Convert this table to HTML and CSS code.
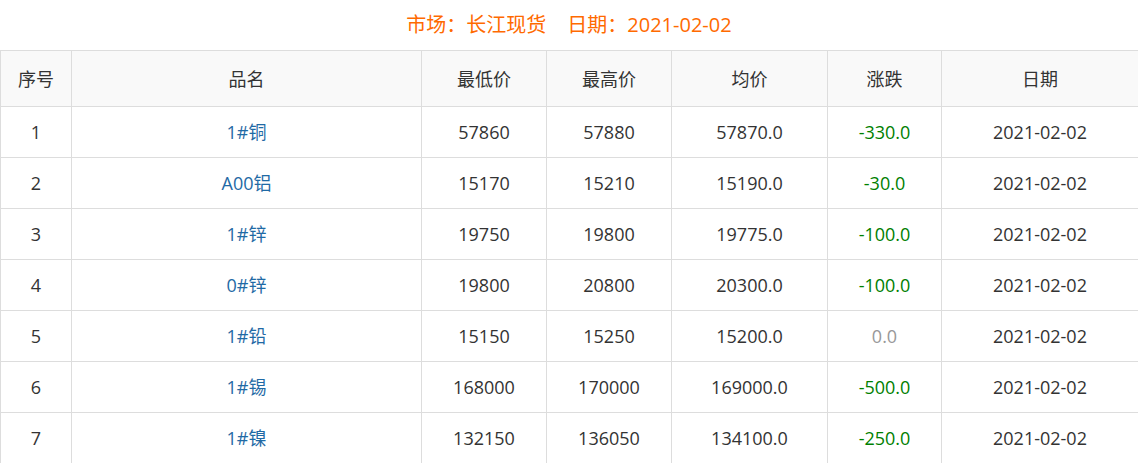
FILE: index.html
```html
<!DOCTYPE html>
<html lang="zh-CN">
<head>
<meta charset="utf-8">
<link rel="stylesheet" href="styles.css">
</head>
<body>
<div class="page">
  <h2 class="title"><span class="market">市场：长江现货</span><span>日期：2021-02-02</span></h2>
  <table class="grid">
    <colgroup>
      <col class="c1"><col class="c2"><col class="c3"><col class="c4"><col class="c5"><col class="c6"><col class="c7">
    </colgroup>
    <thead>
      <tr><th>序号</th><th>品名</th><th>最低价</th><th>最高价</th><th>均价</th><th>涨跌</th><th>日期</th></tr>
    </thead>
    <tbody>
      <tr><td>1</td><td><a class="name" href="#">1#铜</a></td><td>57860</td><td>57880</td><td>57870.0</td><td class="down">-330.0</td><td>2021-02-02</td></tr>
      <tr><td>2</td><td><a class="name" href="#">A00铝</a></td><td>15170</td><td>15210</td><td>15190.0</td><td class="down">-30.0</td><td>2021-02-02</td></tr>
      <tr><td>3</td><td><a class="name" href="#">1#锌</a></td><td>19750</td><td>19800</td><td>19775.0</td><td class="down">-100.0</td><td>2021-02-02</td></tr>
      <tr><td>4</td><td><a class="name" href="#">0#锌</a></td><td>19800</td><td>20800</td><td>20300.0</td><td class="down">-100.0</td><td>2021-02-02</td></tr>
      <tr><td>5</td><td><a class="name" href="#">1#铅</a></td><td>15150</td><td>15250</td><td>15200.0</td><td class="flat">0.0</td><td>2021-02-02</td></tr>
      <tr><td>6</td><td><a class="name" href="#">1#锡</a></td><td>168000</td><td>170000</td><td>169000.0</td><td class="down">-500.0</td><td>2021-02-02</td></tr>
      <tr><td>7</td><td><a class="name" href="#">1#镍</a></td><td>132150</td><td>136050</td><td>134100.0</td><td class="down">-250.0</td><td>2021-02-02</td></tr>
    </tbody>
  </table>
</div>
</body>
</html>
```

FILE: styles.css
```css
html, body {
  margin: 0;
  padding: 0;
  background: #fff;
}
body {
  font-family: "Open Sans", "Noto Sans CJK SC", sans-serif;
  color: #333;
}
.page {
  width: 1138px;
}
.title {
  margin: 0;
  height: 50px;
  line-height: 50px;
  text-align: center;
  font-size: 20px;
  font-weight: normal;
  color: #ff6a00;
}
.market {
  margin-right: 21px;
}
.grid {
  width: 1138px;
  border-collapse: collapse;
  table-layout: fixed;
  font-size: 18px;
  line-height: 24px;
}
.c1 { width: 71px; }
.c2 { width: 350px; }
.c3 { width: 125px; }
.c4 { width: 125px; }
.c5 { width: 156px; }
.c6 { width: 114px; }
.c7 { width: 197px; }
.grid th, .grid td {
  border: 1px solid #ddd;
  text-align: center;
  padding: 0;
  font-weight: normal;
}
.grid th {
  height: 55px;
  background: #f9f9f9;
}
.grid td {
  height: 50px;
}
.name {
  color: #1f6aa5;
  text-decoration: none;
}
.down { color: #008000; }
.flat { color: #999; }
```
